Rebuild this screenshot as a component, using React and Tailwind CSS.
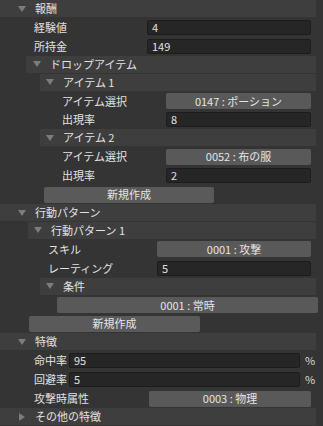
const FONT = { fontFamily: '"Noto Sans CJK JP", "Noto Sans", sans-serif' };

function Triangle({ open }) {
  return (
    <svg width="8" height="8" viewBox="0 0 8 8" className="shrink-0">
      {open ? <polygon points="0,1 8,1 4,7" fill="#7c7c7c" /> : <polygon points="1,0 7,4 1,8" fill="#7c7c7c" />}
    </svg>
  );
}

function Header({ band, tri, label, open = true }) {
  return (
    <div className="h-[18px] flex items-start" style={{ paddingLeft: 0 }}>
      <div className={`h-[17px] flex items-center bg-[#3e3e3e] mr-[7px] flex-1 ${band}`}>
        <div className={tri}>
          <Triangle open={open} />
        </div>
        <span className="ml-[9px] text-[11px] text-[#e2e2e2] leading-none">{label}</span>
      </div>
    </div>
  );
}

function Row({ pad, labelW, label, children, right = "mr-[12px]" }) {
  return (
    <div className={`h-[19px] flex items-center ${pad}`}>
      <div className={`${labelW} shrink-0 text-[11px] text-[#e2e2e2] leading-none`}>{label}</div>
      <div className={`flex-1 flex items-center ${right}`}>{children}</div>
    </div>
  );
}

function Field({ value }) {
  return (
    <div className="h-[15px] flex-1 flex items-center bg-[#262626] border border-[#1c1c1c] rounded-[2px] pl-[4px] text-[11px] text-[#e0e0e0] leading-none">
      {value}
    </div>
  );
}

function Pick({ value }) {
  return (
    <div className="h-[16px] flex-1 flex items-center justify-center bg-[#595959] rounded-[2px] text-[11px] text-[#e4e4e4] leading-none">
      {value}
    </div>
  );
}

function NewButton({ box }) {
  return (
    <div className="h-[19px] flex items-center">
      <div className={`h-[16px] flex items-center justify-center bg-[#5a5a5a] rounded-[2px] text-[11px] text-[#e4e4e4] leading-none ${box}`}>
        新規作成
      </div>
    </div>
  );
}

export default function App() {
  return (
    <div className="w-[323px] h-[426px] overflow-hidden bg-[#343434] flex flex-col" style={FONT}>
      <Header band="pl-[18px]" tri="" label="報酬" />
      <Row pad="pl-[34px]" labelW="w-[113px]" label="経験値">
        <Field value="4" />
      </Row>
      <Row pad="pl-[34px]" labelW="w-[113px]" label="所持金">
        <Field value="149" />
      </Row>
      <Header band="ml-[26px] pl-[7px]" tri="" label="ドロップアイテム" />
      <Header band="ml-[40px] pl-[6px]" tri="" label="アイテム 1" />
      <Row pad="pl-[62px]" labelW="w-[104px]" label="アイテム選択">
        <Pick value="0147 : ポーション" />
      </Row>
      <Row pad="pl-[62px]" labelW="w-[104px]" label="出現率">
        <Field value="8" />
      </Row>
      <Header band="ml-[40px] pl-[6px]" tri="" label="アイテム 2" />
      <Row pad="pl-[62px]" labelW="w-[104px]" label="アイテム選択">
        <Pick value="0052 : 布の服" />
      </Row>
      <Row pad="pl-[62px]" labelW="w-[104px]" label="出現率">
        <Field value="2" />
      </Row>
      <NewButton box="ml-[44px] w-[170px]" />
      <Header band="pl-[18px]" tri="" label="行動パターン" />
      <Header band="ml-[28px] pl-[6px]" tri="" label="行動パターン 1" />
      <Row pad="pl-[48px]" labelW="w-[109px]" label="スキル">
        <Pick value="0001 : 攻撃" />
      </Row>
      <Row pad="pl-[48px]" labelW="w-[109px]" label="レーティング">
        <Field value="5" />
      </Row>
      <Header band="ml-[40px] pl-[6px]" tri="" label="条件" />
      <div className="h-[19px] flex items-center pl-[57px] pr-[5px]">
        <Pick value="0001 : 常時" />
      </div>
      <NewButton box="ml-[29px] w-[171px]" />
      <Header band="pl-[18px]" tri="" label="特徴" />
      <Row pad="pl-[34px]" labelW="w-[35px]" label="命中率" right="mr-[11px]">
        <Field value="95" />
        <span className="ml-[5px] w-[7px] text-[11px] text-[#d8d8d8] leading-none">%</span>
      </Row>
      <Row pad="pl-[34px]" labelW="w-[35px]" label="回避率" right="mr-[11px]">
        <Field value="5" />
        <span className="ml-[5px] w-[7px] text-[11px] text-[#d8d8d8] leading-none">%</span>
      </Row>
      <Row pad="pl-[34px]" labelW="w-[115px]" label="攻撃時属性">
        <Pick value="0003 : 物理" />
      </Row>
      <Header band="pl-[18px]" tri="" label="その他の特徴" open={false} />
    </div>
  );
}
